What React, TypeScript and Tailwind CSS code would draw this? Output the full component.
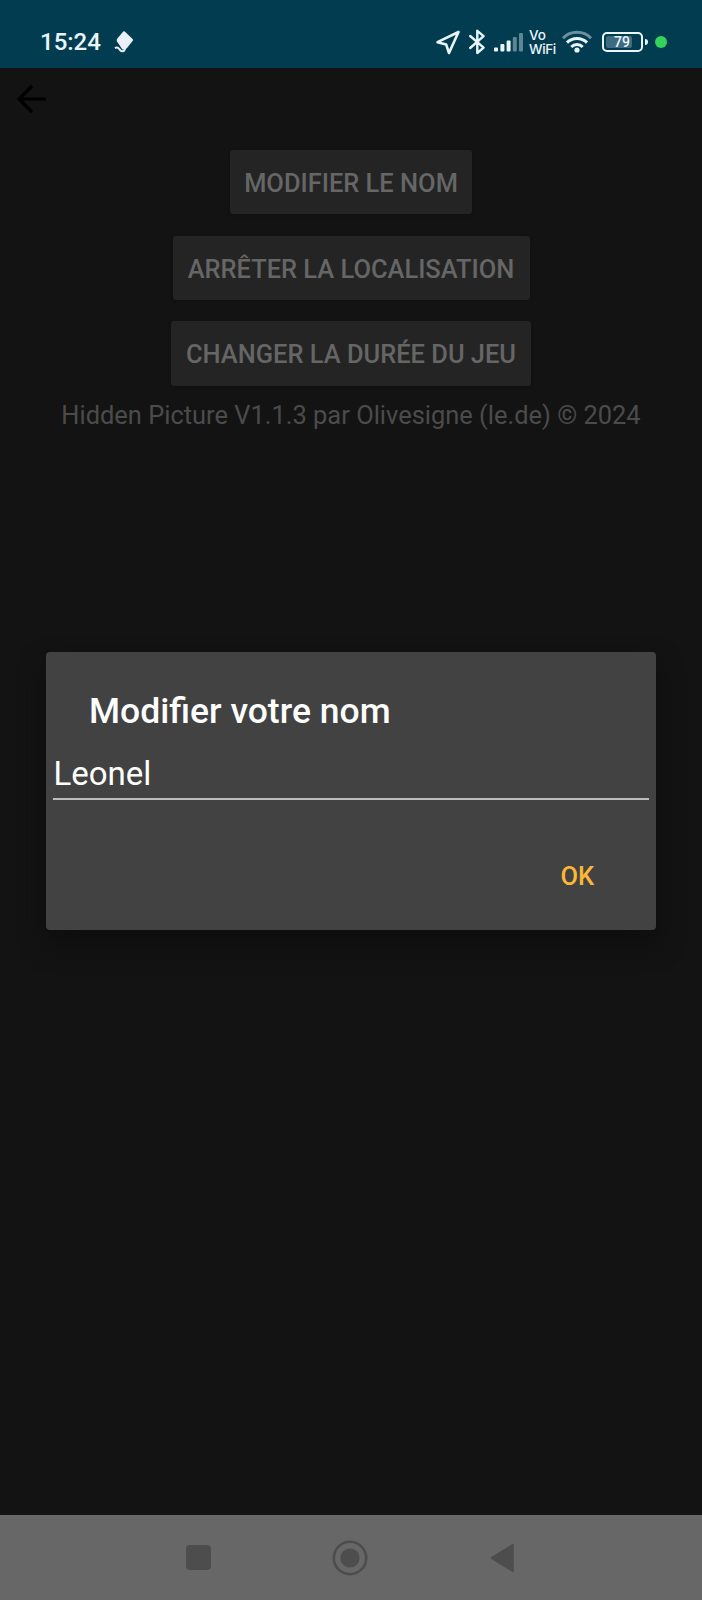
import React from "react";

function LocationIcon() {
  return (
    <svg className="h-[26px] w-[26px]" viewBox="0 0 26 26" fill="none" stroke="#e9f5fb" strokeWidth="2.6" strokeLinejoin="round">
      <path d="M23.5 3 L2.5 13.2 L11.2 15.6 L14 24 Z" />
    </svg>
  );
}

function BluetoothIcon() {
  return (
    <svg className="ml-[7px] h-7 w-[18px]" viewBox="0 0 18 28" fill="none" stroke="#e9f5fb" strokeWidth="2.4" strokeLinejoin="round" strokeLinecap="round">
      <path d="M2.2 8 L15.6 19.6 L9.3 25 V2.8 L15.6 8.2 L2.2 20" />
    </svg>
  );
}

function SignalIcon() {
  return (
    <svg className="ml-[8px] h-[20px] w-[30px]" viewBox="0 0 30 20" fill="#e9f5fb">
      <rect x="0" y="15.5" width="4" height="4" rx="1" />
      <rect x="6.4" y="12" width="4" height="7.5" rx="1" />
      <rect x="12.6" y="8.5" width="4" height="11" rx="1" />
      <rect x="18.8" y="5" width="4" height="14.5" rx="1" opacity=".4" />
      <rect x="25" y="1" width="4" height="18.5" rx="1" opacity=".4" />
    </svg>
  );
}

function WifiIcon() {
  return (
    <svg className="ml-[6px] h-[24px] w-[32px]" viewBox="0 0 32 24" fill="none" stroke="#e9f5fb" strokeWidth="3">
      <path d="M2 8.2 A19.5 19.5 0 0 1 30 8.2" opacity=".45" />
      <path d="M6 12.6 A14 14 0 0 1 26 12.6" />
      <path d="M10.3 17 A8 8 0 0 1 21.7 17" />
      <circle cx="16" cy="20" r="2.6" fill="#e9f5fb" stroke="none" />
    </svg>
  );
}

function Battery() {
  return (
    <div className="ml-[9px] flex items-center">
      <div className="flex h-5 w-[41px] rounded-[5px] border-2 border-[#e9f5fb] p-0.5">
        <div className="flex h-3 w-[26px] items-center justify-end rounded-[2px] bg-[#3f6b80]">
          <span className="mr-[2px] text-[14px] leading-3 font-medium text-[#e9f5fb]">79</span>
        </div>
      </div>
      <div className="ml-[2px] h-[6px] w-[3px] rounded-r-sm bg-[#e9f5fb]" />
    </div>
  );
}

function StatusBar() {
  return (
    <header className="flex h-[68px] items-center bg-[#023c51] pt-4 pr-[35px] pl-[40px]">
      <span className="text-[24px] leading-[28px] font-medium text-[#e9f5fb]">15:24</span>
      <svg className="ml-[13px] h-6 w-5" viewBox="0 0 20 24">
        <path d="M10.8 1.4 L18.6 9 Q19.4 9.8 18.8 10.7 L12.6 18.6 L8.4 19.4 L3 11.4 Q2.3 10.2 3 9.1 L9.2 1.6 Q10 .8 10.8 1.4Z" fill="#e9f0f8" />
        <path d="M1 18.2 C4 16 5 19 6.5 20.5 S11.3 21.5 11 17" fill="none" stroke="#e9f0f8" strokeWidth="2" />
      </svg>
      <div className="ml-auto flex items-center">
        <LocationIcon />
        <BluetoothIcon />
        <SignalIcon />
        <div className="ml-[5px] flex w-[26px] flex-col font-['Inter','Roboto',sans-serif] text-[13.5px] leading-[14px] font-medium text-[#e9f5fb]">
          <span>Vo</span>
          <span className="tracking-[-0.4px]">WiFi</span>
        </div>
        <WifiIcon />
        <Battery />
        <span className="ml-[7px] h-3 w-3 rounded-full bg-[#33d35c]" />
      </div>
    </header>
  );
}

function NavigationBar() {
  return (
    <nav className="flex h-[85px] items-center bg-[#676767] pl-[185.5px]">
      <span className="h-[25.5px] w-[25.5px] rounded-[4px] bg-[#4d4d4d]" />
      <svg className="ml-[121px] h-9 w-9" viewBox="0 0 36 36">
        <circle cx="18" cy="18" r="16.2" fill="none" stroke="#4d4d4d" strokeWidth="2.6" />
        <circle cx="18" cy="18" r="9.6" fill="#4d4d4d" />
      </svg>
      <svg className="ml-[122px] h-[30px] w-[24px]" viewBox="0 0 24 30">
        <path d="M22.2 1.2 L1.4 14 Q.3 15 1.4 16 L22.2 28.8 Q23.8 29.4 23.8 28 V2 Q23.8 .6 22.2 1.2Z" fill="#4d4d4d" />
      </svg>
    </nav>
  );
}

const actionClass =
  "flex h-[64.5px] items-center justify-center rounded-[3px] bg-[#242424] pt-[3px] text-[25.45px] leading-none font-medium whitespace-nowrap text-[#666666] shadow-[0_1px_3px_#0f0f0f]";

export default function App() {
  return (
    <div className="flex h-[1600px] w-[702px] flex-col overflow-hidden bg-[#131313] font-['Roboto','Liberation_Sans',sans-serif]">
      <StatusBar />
      <main className="relative flex flex-1 flex-col">
        <div className="flex h-[81.7px] pt-4 pl-[16px]">
          <svg className="h-[30px] w-[32px]" viewBox="0 0 32 30" fill="none" stroke="#000" strokeWidth="3.2">
            <path d="M30 15 H3.5 M16 2 L3 15 L16 28" />
          </svg>
        </div>
        <div className="flex flex-col items-center gap-[21.4px]">
          <button className={`${actionClass} w-[242px]`}>MODIFIER LE NOM</button>
          <button className={`${actionClass} w-[357px]`}>ARRÊTER LA LOCALISATION</button>
          <button className={`${actionClass} w-[360px]`}>CHANGER LA DURÉE DU JEU</button>
        </div>
        <p className="mt-[13px] text-center text-[25.45px] leading-[32px] whitespace-nowrap text-[#4b4b4b]">
          Hidden Picture V1.1.3 par Olivesigne (le.de) © 2024
        </p>
        <section
          role="dialog"
          className="absolute top-[584px] left-[46px] flex h-[278px] w-[610px] flex-col rounded-[4px] bg-[#424242] px-[7px] shadow-[0_14px_26px_0_#0e0e0e]"
        >
          <h1 className="mt-[38px] pl-[36px] text-[35.5px] leading-[42px] font-medium text-white">Modifier votre nom</h1>
          <div className="mt-[18px] flex h-[49.5px] items-center border-b-2 border-[#bdbdbd] pl-[0.5px] text-[33px] leading-[40px] text-white">
            Leonel
          </div>
          <div className="mt-[60.5px] flex justify-end pr-[55px]">
            <button className="text-[25.45px] leading-[32px] font-medium text-[#fcb738]">OK</button>
          </div>
        </section>
      </main>
      <NavigationBar />
    </div>
  );
}
